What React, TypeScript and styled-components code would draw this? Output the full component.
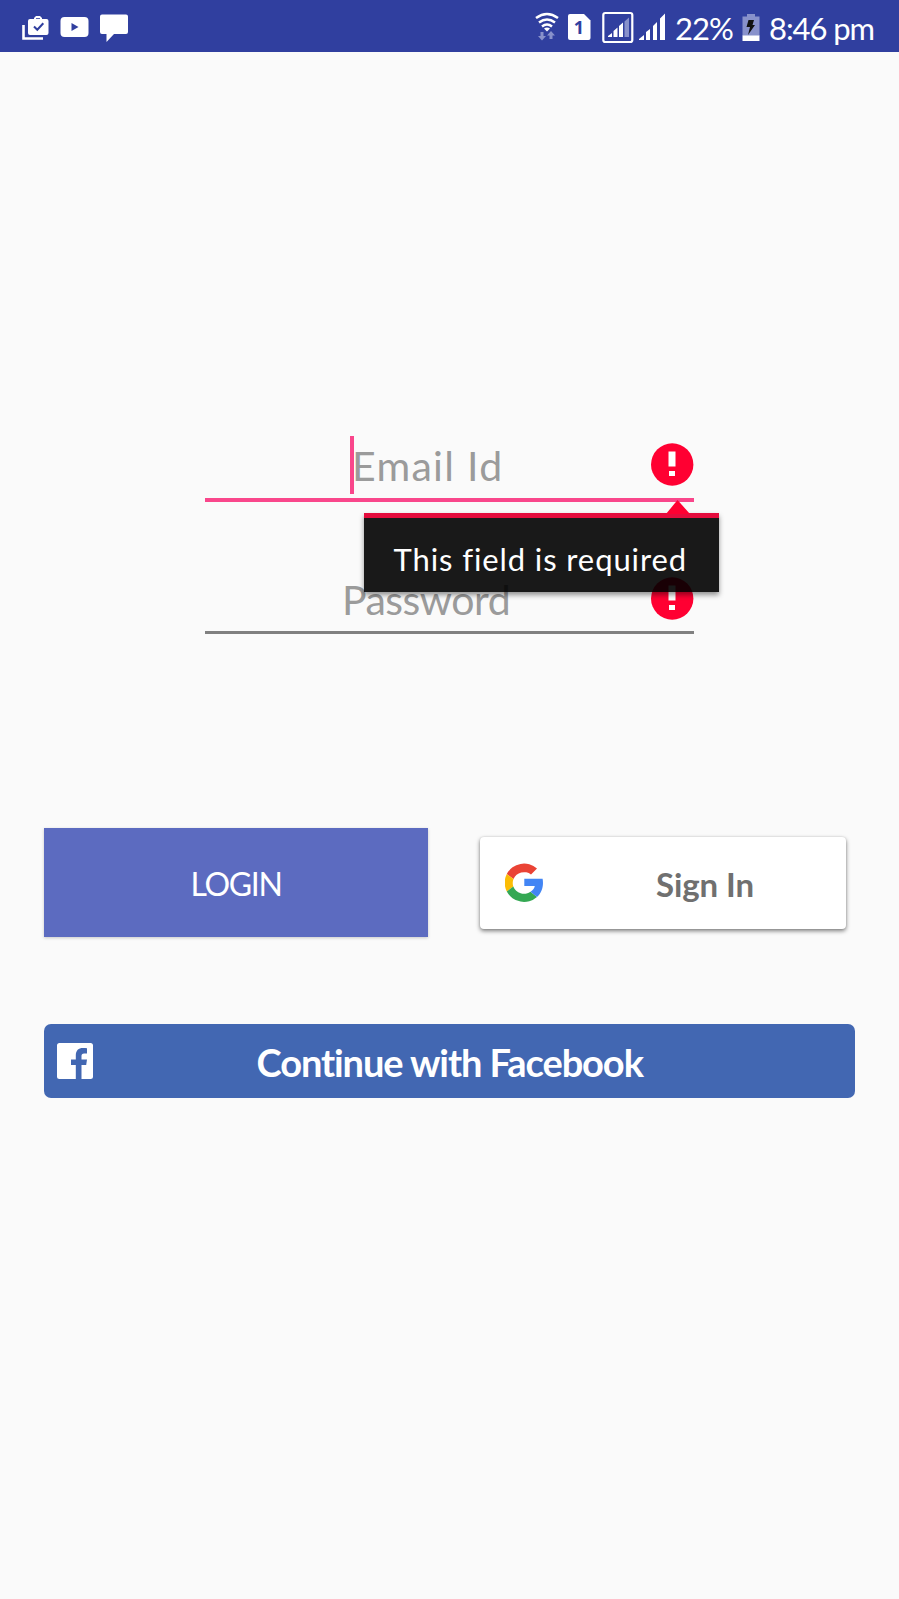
import React from 'react';
import styled, { createGlobalStyle } from 'styled-components';

const GlobalStyle = createGlobalStyle`
  * { box-sizing: border-box; }
  body { margin: 0; background: #fafafa; }
`;

const Screen = styled.main`
  width: 899px;
  height: 1599px;
  background: #fafafa;
  font-family: Lato, "Open Sans", sans-serif;
  overflow: hidden;
`;

const StatusBar = styled.header`
  height: 52px;
  padding: 0 25px 0 22px;
  display: flex;
  justify-content: space-between;
  background: #303f9f;
  color: #fff;
`;

const StatusGroup = styled.div`
  display: flex;
  align-items: flex-start;
`;

const Icon = styled.svg<{ $gap?: number }>`
  display: block;
  flex: none;
  margin-left: ${p => p.$gap ?? 0}px;
`;

const StatusText = styled.span<{ $width: number; $gap: number; $spacing: number }>`
  width: ${p => p.$width}px;
  margin-left: ${p => p.$gap}px;
  font-size: 31px;
  line-height: 56px;
  letter-spacing: ${p => p.$spacing}px;
  white-space: nowrap;
`;

const Form = styled.form`
  padding-top: 376px;
`;

const Fields = styled.div`
  position: relative;
  width: 489px;
  margin-left: 205px;
`;

const Field = styled.div<{ $active?: boolean }>`
  height: ${p => (p.$active ? 74 : 132)}px;
  border-bottom: ${p => (p.$active ? '4px solid #f9468b' : '3px solid #808080')};
  display: flex;
  justify-content: flex-end;
  align-items: flex-end;
`;

const Caret = styled.span`
  width: 4px;
  height: 58px;
  margin-bottom: 4px;
  background: #f9468b;
`;

const Hint = styled.span<{ $width: number; $bottom: number; $spacing: number }>`
  width: ${p => p.$width}px;
  margin-bottom: ${p => p.$bottom}px;
  font-size: 41px;
  line-height: 60px;
  letter-spacing: ${p => p.$spacing}px;
  text-indent: -2px;
  color: #9b9b9b;
  white-space: nowrap;
`;

const ErrorMark = styled(Icon)<{ $bottom: number }>`
  margin-bottom: ${p => p.$bottom}px;
`;

const Tooltip = styled.div`
  position: absolute;
  top: 84.5px;
  left: 158.5px;
  width: 355.5px;
  height: 79.5px;
  padding: 7px 0 0 30px;
  border-top: 5px solid #e40c3d;
  background: rgba(0, 0, 0, 0.9);
  background-clip: padding-box;
  box-shadow: 0 3px 5px rgba(0, 0, 0, 0.42);
  color: #fff;
  font-size: 31px;
  line-height: 68px;
  letter-spacing: 0.9px;
  white-space: nowrap;
`;

const Pointer = styled.svg`
  position: absolute;
  left: 302px;
  top: -18px;
`;

const Actions = styled.div`
  margin: 194px 53px 0 44px;
  display: flex;
  justify-content: space-between;
  align-items: center;
`;

const LoginButton = styled.button`
  width: 384px;
  height: 109px;
  padding: 2px 0 0;
  border: 0;
  background: #5c6bc0;
  box-shadow: 0 1px 3px rgba(0, 0, 0, 0.2);
  color: #fff;
  font: 400 32px Lato, sans-serif;
  letter-spacing: -1.3px;
`;

const GoogleButton = styled.button`
  width: 366px;
  height: 92px;
  padding: 0 0 0 24.5px;
  border: 0;
  border-radius: 4px;
  display: flex;
  align-items: center;
  background: #fff;
  box-shadow: 0 2px 4px rgba(0, 0, 0, 0.5), 0 0 2px rgba(0, 0, 0, 0.12);
  color: #707070;
  font: 700 33px Lato, sans-serif;
`;

const GoogleLabel = styled.span`
  margin: 2px 0 0 113.5px;
  letter-spacing: -0.1px;
`;

const FacebookButton = styled.button`
  width: 811px;
  height: 74px;
  margin: 87px 0 0 44px;
  padding: 0 0 0 13px;
  border: 0;
  border-radius: 7px;
  display: flex;
  align-items: center;
  background: #4267b2;
  color: #fff;
  font: 700 38px Lato, sans-serif;
`;

const FacebookLabel = styled.span`
  margin: 1px 0 0 163.5px;
  letter-spacing: -1.08px;
  white-space: nowrap;
`;

const Alert = ({ bottom }: { bottom: number }) => (
  <ErrorMark $bottom={bottom} width="43" height="43" viewBox="0 0 43 43">
    <circle cx="21.2" cy="21.5" r="21.2" fill="#ff0032" />
    <path d="M17.500 8.500h7v15h-7zM18 28h6v5h-6z" fill="#fff" />
  </ErrorMark>
);

export default function App() {
  return (
    <Screen>
      <GlobalStyle />
      <StatusBar>
        <StatusGroup>
          <Icon width="28" height="52" viewBox="0 0 28 52">
            <path d="M1.500 25v13.500H21" fill="none" stroke="#fff" strokeWidth="2.600" />
            <path d="M8 19h4v-1l2-2h4l2 2v1h4.500a2 2 0 0 1 2 2v12a2 2 0 0 1-2 2H8a2 2 0 0 1-2-2V21a2 2 0 0 1 2-2z" fill="#fff" />
            <path d="M14 19v-.8h4v.8z" fill="#303f9f" />
            <path d="M12 26.500l3.300 3.300 6-6.500" fill="none" stroke="#303f9f" strokeWidth="2" />
          </Icon>
          <Icon $gap={10} width="29" height="52" viewBox="0 0 29 52">
            <rect x=".5" y="17" width="28" height="20" rx="4" fill="#fff" />
            <path d="M11.500 23v8l7-4z" fill="#303f9f" />
          </Icon>
          <Icon $gap={11} width="28" height="52" viewBox="0 0 28 52">
            <path d="M2 14.500h24a2 2 0 0 1 2 2V32a2 2 0 0 1-2 2H14l-7.500 8v-8H2a2 2 0 0 1-2-2V16.500a2 2 0 0 1 2-2z" fill="#fff" />
          </Icon>
        </StatusGroup>
        <StatusGroup>
          <Icon width="24" height="52" viewBox="0 0 24 52">
            <path d="M1 18q11-8 22 0M4 22.500q8-6 16 0M7 26.500q5-4 10 0" fill="none" stroke="#fff" strokeWidth="2.500" />
            <path d="M9 28.500q3-2 6 0l-3 3z" fill="#fff" />
            <path d="M5.500 32h3v4H11l-4 4.500L3 36h2.500zM14.500 39h3v-3.500H20L16 31l-4 4.500h2.500z" fill="#8891cb" />
          </Icon>
          <Icon $gap={9} width="23" height="52" viewBox="0 0 23 52">
            <path d="M2 14h14l6.500 6.500V38a2 2 0 0 1-2 2H2a2 2 0 0 1-2-2V16a2 2 0 0 1 2-2z" fill="#fff" />
            <text x="11" y="34" textAnchor="middle" fontFamily="Open Sans" fontWeight="700" fontSize="18" fill="#303f9f">1</text>
          </Icon>
          <Icon $gap={11} width="32" height="52" viewBox="0 0 32 52">
            <rect x="1.300" y="13" width="29" height="29" rx="2" fill="none" stroke="#fff" strokeWidth="2.200" />
            <path d="M6 37v-1l4-3v4zM11.500 37v-6l4-3.500V37zM17 37V26l4-3.500V37z" fill="#fff" />
            <path d="M22.500 37V21.500l4.500-4V37z" fill="#8891cb" />
          </Icon>
          <Icon $gap={5} width="27" height="52" viewBox="0 0 27 52">
            <path d="M0 40v-1l5-4v5zM7 40v-8l4-3v11zM14 40V26l4-4v18zM21 40V18.500l5-5V40z" fill="#fff" />
          </Icon>
          <StatusText $gap={9} $width={60} $spacing={-1}>22%</StatusText>
          <Icon $gap={7} width="18" height="52" viewBox="0 0 18 52">
            <path d="M5 14h8v2.500h4.500V36H.5V16.500H5z" fill="#8891cb" />
            <path d="M.5 35.500h17V41H.5z" fill="#fff" />
            <path d="M6.500 20H12l-1.500 5H13L6 35l2-8H4.500z" fill="#111" />
          </Icon>
          <StatusText $gap={9} $width={105} $spacing={-1.1}>8:46 pm</StatusText>
        </StatusGroup>
      </StatusBar>
      <Form>
        <Fields>
          <Field $active>
            <Caret />
            <Hint $width={297} $bottom={2} $spacing={1.3}>Email Id</Hint>
            <Alert bottom={12} />
          </Field>
          <Field>
            <Hint $width={307} $bottom={1} $spacing={-0.5}>Password</Hint>
            <Alert bottom={11} />
          </Field>
          <Tooltip>
            <Pointer width="24" height="14" viewBox="0 0 24 14">
              <path d="M0 14 11.500 0 24 14z" fill="#ff0032" />
            </Pointer>
            This field is required
          </Tooltip>
        </Fields>
        <Actions>
          <LoginButton type="button">LOGIN</LoginButton>
          <GoogleButton type="button">
            <Icon width="38" height="39" viewBox="0 0 38 39">
              <path d="M32 5.500A19.500 19.500 0 0 0 1.800 11l6.700 5A11.500 11.500 0 0 1 26 11.500z" fill="#ea4335" />
              <path d="M1.800 11a20 20 0 0 0 0 17.500l6.500-5a11 11 0 0 1 .2-7.500z" fill="#fbbc05" />
              <path d="M1.800 28.500A19.500 19.500 0 0 0 32 34l-6.500-5.200A11.500 11.500 0 0 1 8.300 23.500z" fill="#34a853" />
              <path d="M19.300 15.800h18.300c1.300 7-.7 14-5.600 18.200l-6.500-5.200c2.400-1.500 3.800-3.500 4.300-5.800H19.300z" fill="#4285f4" />
            </Icon>
            <GoogleLabel>Sign In</GoogleLabel>
          </GoogleButton>
        </Actions>
        <FacebookButton type="button">
          <Icon width="36" height="36" viewBox="0 0 36 36">
            <path d="M2.500 0h31a2.500 2.500 0 0 1 2.500 2.500v31a2.500 2.500 0 0 1-2.500 2.500h-9V22h4.700l.8-5.500h-5.500V13c0-1.800.7-2.600 2.600-2.600H30V5.300C29 5.100 27.600 5 26 5c-4.500 0-7.200 2.500-7.200 7.400v4.100H14V22h4.800v14H2.500A2.500 2.500 0 0 1 0 33.500v-31A2.500 2.500 0 0 1 2.500 0z" fill="#fff" />
          </Icon>
          <FacebookLabel>Continue with Facebook</FacebookLabel>
        </FacebookButton>
      </Form>
    </Screen>
  );
}
